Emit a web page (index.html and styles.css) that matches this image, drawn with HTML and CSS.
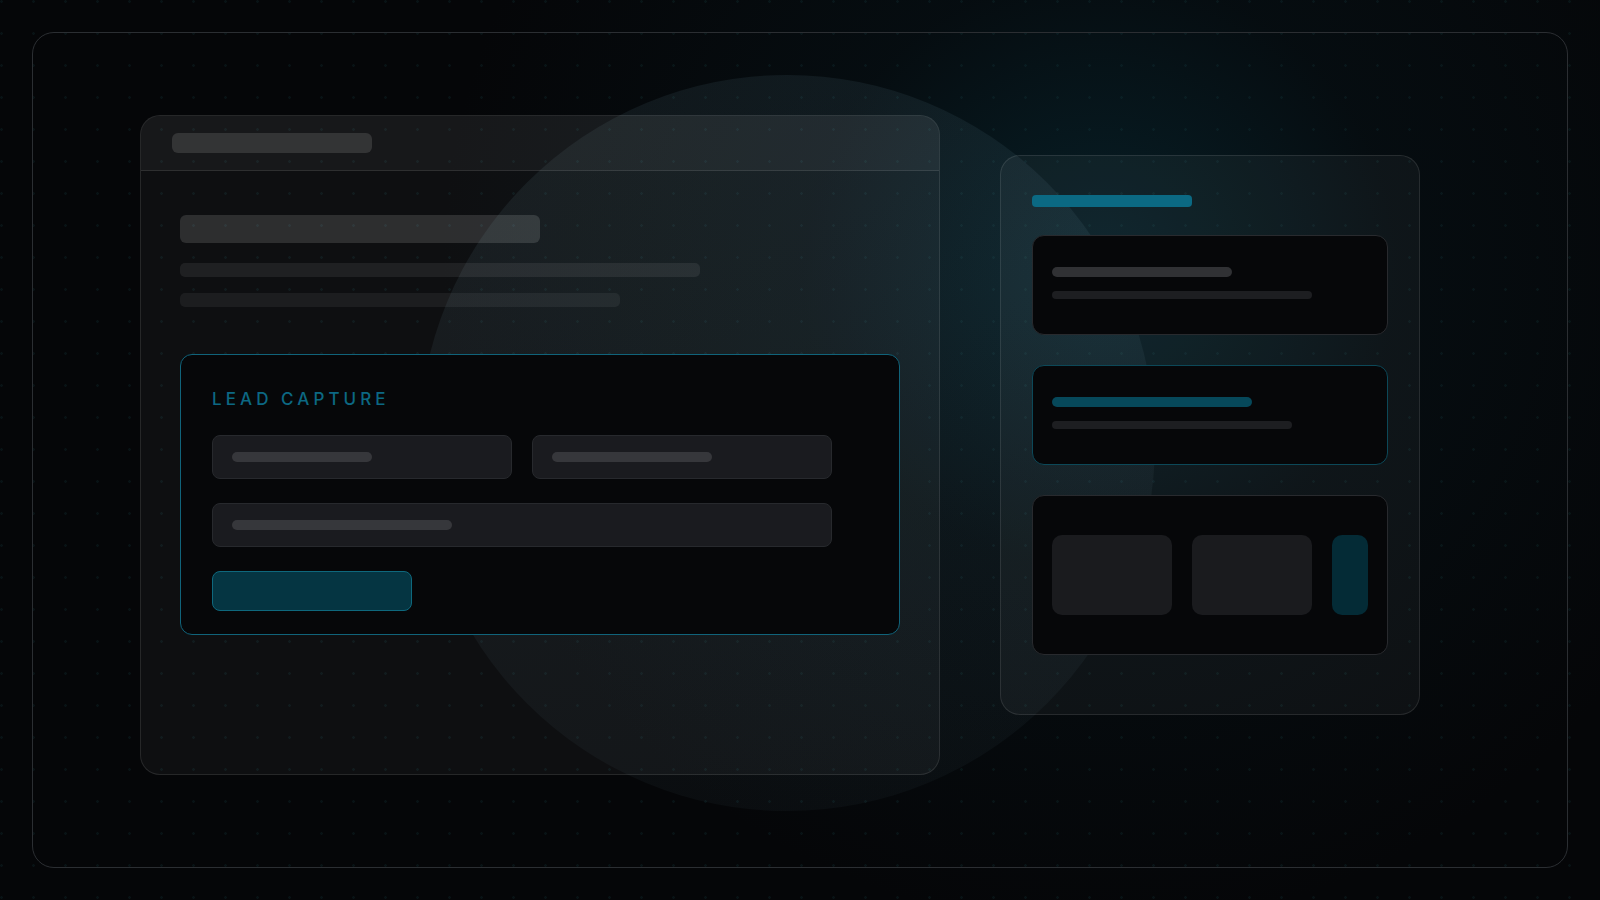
FILE: index.html
```html
<!DOCTYPE html>
<html lang="en">
<head>
<meta charset="utf-8">
<title>Lead Capture</title>
<link rel="stylesheet" href="styles.css">
</head>
<body>
<div class="frame">
  <div class="orb"></div>

  <section class="panel panel-main">
    <div class="panel-head"><div class="sk sk-head"></div></div>
    <div class="panel-body">
      <div class="sk sk-title"></div>
      <div class="sk sk-line sk-line-1"></div>
      <div class="sk sk-line sk-line-2"></div>

      <div class="lead-card">
        <div class="lead-label">LEAD CAPTURE</div>
        <div class="lead-form">
          <div class="field"><div class="sk ph ph-1"></div></div>
          <div class="field"><div class="sk ph ph-2"></div></div>
          <div class="field field-wide"><div class="sk ph ph-3"></div></div>
        </div>
        <div class="lead-btn"></div>
      </div>
    </div>
  </section>

  <aside class="panel panel-side">
    <div class="sk side-accent"></div>
    <div class="side-card">
      <div class="sk sc-l1 sc-grey1"></div>
      <div class="sk sc-l2"></div>
    </div>
    <div class="side-card side-card-active">
      <div class="sk sc-l1 sc-teal"></div>
      <div class="sk sc-l2 sc-w240"></div>
    </div>
    <div class="side-card side-card-tiles">
      <div class="tile"></div>
      <div class="tile"></div>
      <div class="tile tile-accent"></div>
    </div>
  </aside>
</div>
</body>
</html>
```

FILE: styles.css
```css
html, body {
  margin: 0;
  padding: 0;
  width: 1600px;
  height: 900px;
  overflow: hidden;
}

body {
  font-family: "Inter", "Liberation Sans", sans-serif;
  background-color: #050608;
  background-image:
    radial-gradient(circle at 1.5px 1.5px, rgba(30, 90, 95, 0.15) 1px, transparent 1.6px),
    radial-gradient(circle 660px at 1100px 270px, rgba(10, 58, 72, 0.5), rgba(8, 36, 46, 0.22) 45%, rgba(5, 6, 8, 0) 100%);
  background-size: 32px 32px, 100% 100%;
  background-repeat: repeat, no-repeat;
}

.frame {
  position: relative;
  box-sizing: border-box;
  margin: 32px;
  height: 836px;
  border: 1px solid #2b2e32;
  border-radius: 22px;
  display: flex;
  align-items: flex-start;
  gap: 60px;
  padding-left: 107px;
}

.orb {
  position: absolute;
  left: 386px;
  top: 42px;
  width: 736px;
  height: 736px;
  border-radius: 50%;
  background: linear-gradient(170deg, rgba(140, 190, 210, 0.085), rgba(140, 190, 210, 0.035));
}

.panel {
  position: relative;
  box-sizing: border-box;
  border: 1px solid rgba(255, 255, 255, 0.1);
  border-radius: 20px;
  background: rgba(255, 255, 255, 0.04);
}

.sk {
  border-radius: 5px;
}

/* main panel */
.panel-main {
  width: 800px;
  height: 660px;
  margin-top: 82px;
}

.panel-head {
  height: 54px;
  border-bottom: 1px solid rgba(255, 255, 255, 0.1);
  border-radius: 19px 19px 0 0;
  background: rgba(255, 255, 255, 0.04);
  display: flex;
  align-items: center;
  padding-left: 31px;
}

.sk-head {
  width: 200px;
  height: 20px;
  border-radius: 6px;
  background: rgba(255, 255, 255, 0.12);
}

.panel-body {
  padding: 44px 39px;
}

.sk-title {
  width: 360px;
  height: 28px;
  border-radius: 6px;
  background: rgba(255, 255, 255, 0.13);
  margin-bottom: 20px;
}

.sk-line {
  height: 14px;
  border-radius: 5px;
}

.sk-line-1 {
  width: 520px;
  background: rgba(255, 255, 255, 0.075);
  margin-bottom: 16px;
}

.sk-line-2 {
  width: 440px;
  background: rgba(255, 255, 255, 0.06);
}

.lead-card {
  margin-top: 47px;
  border: 1px solid #10637a;
  border-radius: 12px;
  background: #060709;
  padding: 34px 31px 23px;
}

.lead-label {
  font-size: 17px;
  line-height: 20px;
  letter-spacing: 0.24em;
  color: #0c6883;
  font-weight: 500;
  margin-bottom: 26px;
}

.lead-form {
  display: grid;
  grid-template-columns: 300px 300px;
  gap: 24px 20px;
}

.field {
  box-sizing: border-box;
  height: 44px;
  border: 1px solid #27292d;
  border-radius: 8px;
  background: #1a1b1f;
  display: flex;
  align-items: center;
  padding-left: 19px;
}

.field-wide {
  grid-column: 1 / 3;
}

.ph {
  height: 10px;
  border-radius: 5px;
  background: #36373b;
}

.ph-1 { width: 140px; }
.ph-2 { width: 160px; }
.ph-3 { width: 220px; }

.lead-btn {
  box-sizing: border-box;
  margin-top: 24px;
  width: 200px;
  height: 40px;
  border: 1px solid #0e687d;
  border-radius: 8px;
  background: #053542;
}

/* side panel */
.panel-side {
  width: 420px;
  height: 560px;
  margin-top: 122px;
  padding: 39px 31px;
  display: flex;
  flex-direction: column;
  gap: 30px;
}

.side-accent {
  width: 160px;
  height: 12px;
  border-radius: 4px;
  background: #0b6983;
  margin-bottom: -2px;
}

.side-card {
  box-sizing: border-box;
  height: 100px;
  border: 1px solid #282a2e;
  border-radius: 12px;
  background: #060709;
  padding: 31px 19px;
}

.side-card-active {
  border-color: #0c4858;
}

.sc-l1 {
  width: 180px;
  height: 10px;
  margin-bottom: 14px;
}

.sc-grey1 { background: #303134; }

.sc-teal {
  width: 200px;
  background: #06485a;
}

.sc-l2 {
  width: 260px;
  height: 8px;
  border-radius: 4px;
  background: #1d1e21;
}

.sc-w240 { width: 240px; }

.side-card-tiles {
  height: 160px;
  padding: 0 19px;
  display: flex;
  align-items: center;
  gap: 20px;
}

.tile {
  width: 120px;
  height: 80px;
  border-radius: 10px;
  background: #1a1b1e;
}

.tile-accent {
  width: auto;
  flex: 1;
  background: #042b36;
}
```
